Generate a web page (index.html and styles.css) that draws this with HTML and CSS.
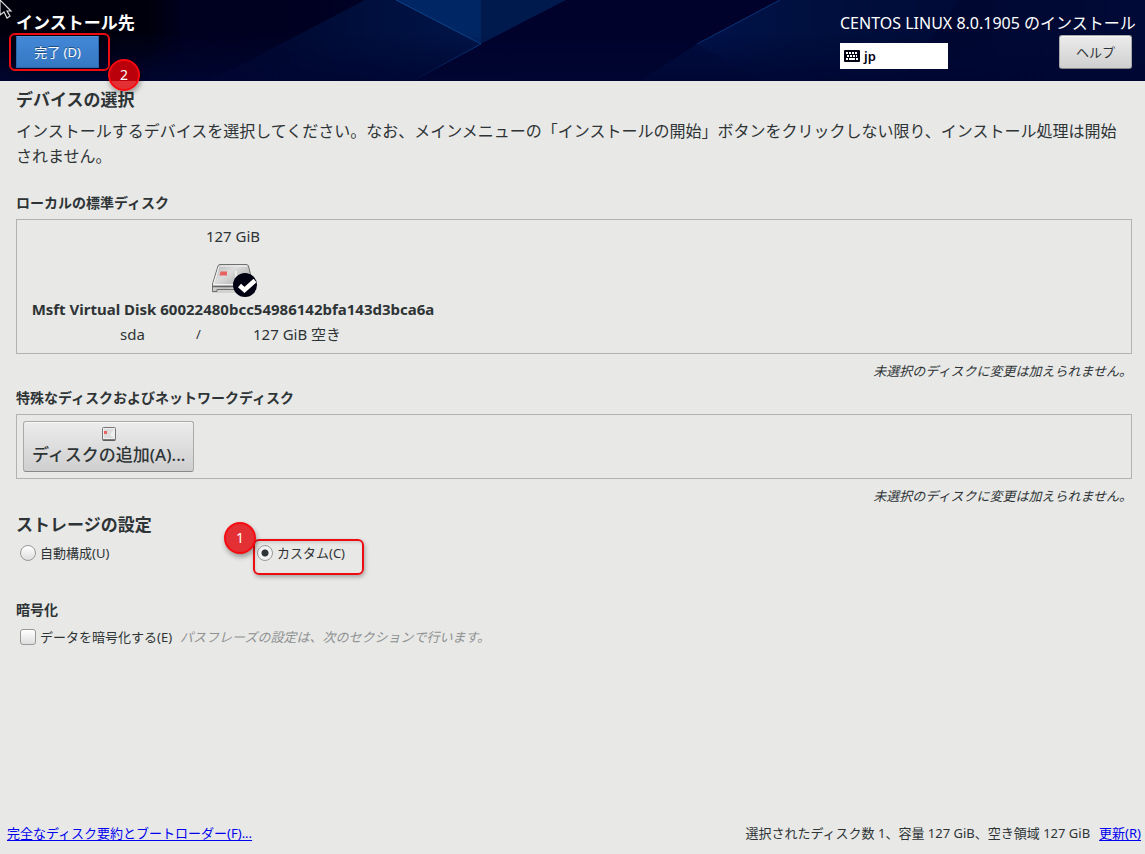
FILE: index.html
```html
<!DOCTYPE html>
<html lang="ja">
<head>
<meta charset="utf-8">
<meta name="viewport" content="width=device-width, initial-scale=1">
<title>インストール先</title>
<link rel="stylesheet" href="styles.css">
</head>
<body>
<header class="topbar">
  <svg class="topbar-art" viewBox="0 0 1145 81" preserveAspectRatio="none" aria-hidden="true">
    <defs>
      <linearGradient id="base" x1="0" x2="1"><stop offset="0" stop-color="#00000d"/><stop offset=".13" stop-color="#00000d"/><stop offset=".16" stop-color="#00001f"/><stop offset="1" stop-color="#000a36"/></linearGradient>
      <linearGradient id="beam" x1="0" x2="1"><stop offset="0" stop-color="#000528"/><stop offset=".5" stop-color="#00103f"/><stop offset="1" stop-color="#001a50"/></linearGradient>
      <linearGradient id="wing" x1="0" x2="1"><stop offset="0" stop-color="#00124a"/><stop offset=".4" stop-color="#00103f"/><stop offset="1" stop-color="#000a36"/></linearGradient>
      <linearGradient id="fade" x1="0" y1="0" x2="0" y2="1"><stop offset=".4" stop-color="#000632" stop-opacity="0"/><stop offset="1" stop-color="#000632" stop-opacity=".9"/></linearGradient>
    </defs>
    <rect width="1145" height="81" fill="url(#base)"/>
    <path d="M365 0H566L481 44L415 81H210Z" fill="url(#beam)"/>
    <path d="M396 0H481V44Z" fill="#002763"/>
    <path d="M481 0H566L481 44Z" fill="#001a4e"/>
    <path d="M566 0H780L697 44L635 81H415L481 44Z" fill="#00022b"/>
    <path d="M780 0H960L900 81H750L697 44Z" fill="url(#wing)"/>
    <path d="M697 44L760 81H640Z" fill="#000e40"/>
    <path d="M396 0L481 44L418 78" fill="none" stroke="#0b438b"/>
    <path d="M697 44L780 0" fill="none" stroke="#06357a"/>
    <rect width="1145" height="81" fill="url(#fade)"/>
  </svg>
  <div class="topbar-start">
    <h1 class="page-title">インストール先</h1>
    <div class="callout-anchor">
      <button class="done-button" type="button">完了 (D)</button>
      <span class="callout callout-done"></span>
      <span class="marker marker-done">2</span>
    </div>
  </div>
  <div class="topbar-end">
    <p class="product">CENTOS LINUX 8.0.1905 のインストール</p>
    <div class="topbar-tools">
      <button class="layout-indicator" type="button">
        <svg width="16" height="12" viewBox="0 0 16 12" aria-hidden="true"><rect width="16" height="12" rx="1" fill="#000012"/><path d="M2 3H14M3 6H13" stroke="#fff" stroke-width="2" stroke-dasharray="2 1"/><path d="M2 9H4M5 9H11M12 9H14" stroke="#fff" stroke-width="2"/></svg>
        <span>jp</span>
      </button>
      <button class="help-button" type="button">ヘルプ</button>
    </div>
  </div>
  <svg class="pointer" width="13" height="19" viewBox="0 0 13 19" aria-hidden="true"><path d="M0 0L11 11H7L10 16L7 18L4 12L0 15Z" fill="#00000d" stroke="#ddd" stroke-width="1.2"/></svg>
</header>

<main class="content">
  <section>
    <h2 class="heading">デバイスの選択</h2>
    <p class="lead">インストールするデバイスを選択してください。なお、メインメニューの「インストールの開始」ボタンをクリックしない限り、インストール処理は開始されません。</p>
  </section>
  <section class="local-disks">
    <h3 class="subheading">ローカルの標準ディスク</h3>
    <div class="frame disk-frame">
      <button class="disk" type="button" aria-pressed="true">
        <span>127 GiB</span>
        <svg class="disk-icon" width="48" height="36" viewBox="0 0 48 36" aria-hidden="true">
          <defs><linearGradient id="metal" x1="0" y1="0" x2="1" y2="1"><stop offset="0" stop-color="#b4b4b4"/><stop offset=".35" stop-color="#dcdcdc"/><stop offset=".6" stop-color="#bfbfbf"/><stop offset="1" stop-color="#eee"/></linearGradient></defs>
          <path d="M3 27H38V30H3Z" fill="#bbb" opacity=".5"/>
          <path d="M9 3Q9.500 1.500 11 1.500H37Q39 1.500 39.500 3L44 22V26.500H8V28.500H3.500V21Z" fill="url(#metal)" stroke="#6f6f6f"/>
          <path d="M10.500 3H38M10 3.500L4.500 21.500H42" fill="none" stroke="#f5f5f5"/>
          <path d="M4 23.500H43" stroke="#666" stroke-width="1.500"/>
          <path d="M27 8V21" stroke="#eee" stroke-width="2"/>
          <path d="M11.500 8.500H18V12.500H10.500Z" fill="#e8635f"/>
          <circle cx="36" cy="22" r="12" fill="#000012"/>
          <path d="M30.500 22.500L35.500 27L46 17.500" fill="none" stroke="#fff" stroke-width="4.500"/>
        </svg>
        <strong class="disk-name">Msft Virtual Disk 60022480bcc54986142bfa143d3bca6a</strong>
        <span class="disk-meta"><span>sda</span><span class="slash">/</span><span>127 GiB 空き</span></span>
      </button>
    </div>
    <p class="note">未選択のディスクに変更は加えられません。</p>
  </section>
  <section class="network-disks">
    <h3 class="subheading">特殊なディスクおよびネットワークディスク</h3>
    <div class="frame add-frame">
      <button class="add-button" type="button">
        <svg width="14" height="14" viewBox="0 0 14 14" aria-hidden="true"><rect x=".5" y=".5" width="13" height="13" rx="1" fill="#eee" stroke="#777"/><path d="M2 2H12L8 8L12 11H2Z" fill="#ddd"/><path d="M1 13H13" stroke="#555" stroke-width="1.500"/><rect x="2" y="4" width="3" height="3" fill="#e8635f"/></svg>
        <span>ディスクの追加(A)...</span>
      </button>
    </div>
    <p class="note">未選択のディスクに変更は加えられません。</p>
  </section>
  <section class="storage">
    <h2 class="heading">ストレージの設定</h2>
    <div class="choices">
      <label class="choice"><input class="tick radio" type="radio" name="storage">自動構成(U)</label>
      <div class="callout-anchor">
        <label class="choice"><input class="tick radio" type="radio" name="storage" checked>カスタム(C)</label>
        <span class="callout callout-custom"></span>
        <span class="marker marker-custom">1</span>
      </div>
    </div>
  </section>
  <section class="encryption">
    <h3 class="subheading">暗号化</h3>
    <div class="encrypt-row">
      <label class="choice"><input class="tick" type="checkbox">データを暗号化する(E)</label>
      <em class="hint">パスフレーズの設定は、次のセクションで行います。</em>
    </div>
  </section>
</main>

<footer class="footer">
  <a href="#summary">完全なディスク要約とブートローダー(F)...</a>
  <div class="totals"><span>選択されたディスク数 1、容量 127 GiB、空き領域 127 GiB</span><a href="#refresh">更新(R)</a></div>
</footer>
</body>
</html>
```
FILE: styles.css
```css
* {
  box-sizing: border-box;
}

body {
  display: flex;
  flex-direction: column;
  min-height: 100vh;
  margin: 0;
  background: #e8e8e6;
  color: #2e3436;
  font: 13px/20px "Noto Sans", "Noto Sans CJK JP", sans-serif;
}

h1, h2, h3, p {
  margin: 0;
}

button {
  padding: 0;
  border: 0;
  background: none;
  color: inherit;
  font: inherit;
}

svg {
  display: block;
}

a {
  color: #0000ee;
  text-underline-offset: 2px;
}

.topbar {
  position: relative;
  display: flex;
  justify-content: space-between;
  padding: 11px 13px 12px 16px;
  color: #fff;
}

.topbar-art {
  position: absolute;
  inset: 0;
  z-index: -1;
  width: 100%;
  height: 100%;
}

.pointer {
  position: absolute;
  top: 0;
  left: 0;
}

.topbar-start {
  display: flex;
  flex-direction: column;
  gap: 1px;
}

.page-title,
.heading {
  font-size: 17px;
  line-height: 24px;
  font-weight: 700;
}

.callout-anchor {
  position: relative;
}

.done-button {
  width: 83px;
  height: 32px;
  border: 1px solid #2a68ad;
  border-top-color: #5c9be0;
  background: linear-gradient(#4388d8, #3578c2);
  text-shadow: 0 -1px #205080;
}

.callout {
  position: absolute;
  border: 2px solid #ec0c12;
  border-radius: 6px;
  box-shadow: 1px 2px 4px rgb(0 0 0 / 30%), inset 1px 2px 3px rgb(0 0 0 / 10%);
  pointer-events: none;
}

.callout-done {
  inset: -3px auto auto -7px;
  width: 101px;
  height: 38px;
}

.callout-custom {
  inset: -4px auto auto -4px;
  width: 111px;
  height: 36px;
}

.marker {
  position: absolute;
  z-index: 1;
  display: grid;
  place-items: center;
  width: 32px;
  height: 32px;
  border: 2px solid #f80b10;
  border-radius: 50%;
  background: #e23035;
  box-shadow: 1px 3px 5px rgb(0 0 0 / 35%);
  color: #fff;
  font-size: 14px;
}

.marker-done {
  inset: 23px auto auto 92px;
  background: linear-gradient(#b9000b 70%, #e23035 70%);
}

.marker-custom {
  inset: -21px auto auto -33px;
}

.product {
  font-size: 16px;
  line-height: 24px;
}

.topbar-end {
  display: flex;
  flex-direction: column;
  width: 292px;
  white-space: nowrap;
}

.topbar-tools {
  display: flex;
  justify-content: space-between;
  align-items: flex-end;
}

.layout-indicator {
  display: flex;
  align-items: center;
  gap: 4px;
  width: 108px;
  height: 26px;
  padding: 0 4px;
  background: #fff;
  color: #000012;
  font-size: 13px;
  font-weight: 600;
}

.help-button,
.add-button {
  border: 1px solid #aaa;
  border-bottom-color: #888;
  border-radius: 3px;
  background: linear-gradient(#ececec, #cfcfcf);
  box-shadow: inset 0 1px #f7f7f7;
  color: #2e3436;
}

.help-button {
  width: 73px;
  height: 34px;
}

.content {
  flex: 1;
  padding: 7px 13px 0 16px;
}

.lead {
  margin-top: 7px;
  font-size: 16px;
  line-height: 25px;
}

.local-disks {
  margin-top: 24px;
}

.network-disks,
.storage {
  margin-top: 7px;
}

.subheading {
  font-size: 14px;
  line-height: 20px;
  font-weight: 700;
}

.frame {
  margin-top: 6px;
  border: 1px solid #b2b2b0;
}

.disk-frame {
  padding: 4px 12px 6px;
}

.disk {
  display: flex;
  flex-direction: column;
  align-items: center;
  width: 408px;
  font-size: 15px;
  line-height: 25px;
  white-space: nowrap;
}

.disk-icon {
  margin: 14px 0 -2px;
}

.disk-name {
  font-weight: 700;
}

.disk-meta {
  display: grid;
  grid-template-columns: 76px 57px auto;
  justify-content: start;
  align-self: stretch;
  padding-left: 91px;
  text-align: left;
}

.slash {
  font-size: 13px;
}

.note {
  margin-top: 7px;
  text-align: right;
  font-style: italic;
}

.add-frame {
  padding: 6px;
}

.add-button {
  display: flex;
  flex-direction: column;
  align-items: center;
  height: 51px;
  padding: 5px 8px 0;
  font-size: 17px;
  line-height: 28px;
  font-weight: 500;
}

.choices {
  display: grid;
  grid-template-columns: 237px 1fr;
  margin-top: 6px;
  padding-left: 4px;
}

.choices .callout-anchor {
  justify-self: start;
}

.choice {
  display: flex;
  align-items: center;
  gap: 4px;
}

.tick {
  appearance: none;
  width: 16px;
  height: 16px;
  margin: 0;
  border: 1px solid #999;
  border-radius: 3px;
  background: linear-gradient(#fff, #ddd);
}

.radio {
  border-radius: 50%;
}

.radio:checked {
  background: radial-gradient(circle, #2e3436 3px, #f2f2f2 4px);
}

.encryption {
  margin-top: 37px;
}

.encrypt-row {
  display: flex;
  gap: 8px;
  margin-top: 7px;
  padding-left: 4px;
}

.hint {
  color: #8e9191;
}

.footer {
  display: flex;
  justify-content: space-between;
  padding: 0 4px 11px 7px;
}

.totals {
  display: flex;
  gap: 9px;
}
```
